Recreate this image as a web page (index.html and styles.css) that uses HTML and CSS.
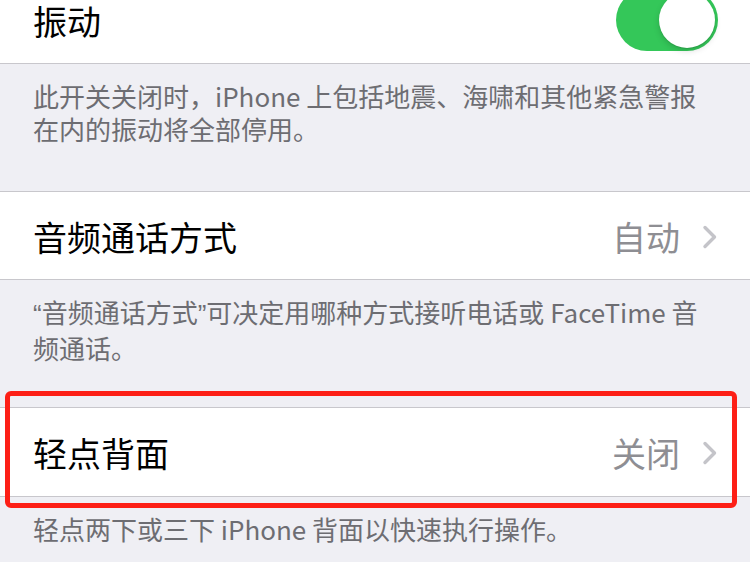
FILE: index.html
```html
<!DOCTYPE html>
<html lang="zh-CN">
<head>
<meta charset="utf-8">
<link rel="stylesheet" href="styles.css">
</head>
<body>
<div class="page">
  <div class="cell first">
    <span class="title">振动</span>
    <span class="toggle"><span class="knob"></span></span>
  </div>
  <div class="footer">此开关关闭时，iPhone 上包括地震、海啸和其他紧急警报<br>在内的振动将全部停用。</div>

  <div class="cell">
    <span class="title">音频通话方式</span>
    <span class="detail">自动
      <svg class="chev" width="16" height="24" viewBox="0 0 16 24"><path d="M3 2.5 L12.5 12 L3 21.5" fill="none" stroke="#c4c4c9" stroke-width="3.4" stroke-linecap="round" stroke-linejoin="round"/></svg>
    </span>
  </div>
  <div class="footer"><span class="q">“</span>音频通话方式<span class="q">”</span>可决定用哪种方式接听电话或 FaceTime 音<br>频通话。</div>

  <div class="cell marked">
    <span class="title">轻点背面</span>
    <span class="detail">关闭
      <svg class="chev" width="16" height="24" viewBox="0 0 16 24"><path d="M3 2.5 L12.5 12 L3 21.5" fill="none" stroke="#c4c4c9" stroke-width="3.4" stroke-linecap="round" stroke-linejoin="round"/></svg>
    </span>
    <span class="redbox"></span>
  </div>
  <div class="footer">轻点两下或三下 iPhone 背面以快速执行操作。</div>
</div>
</body>
</html>
```
FILE: styles.css
```css
html, body {
  margin: 0;
  padding: 0;
  background: #efeff4;
  overflow: hidden;
}
body {
  width: 750px;
  height: 562px;
  font-family: "Noto Sans CJK SC", "Noto Sans", sans-serif;
}
.page {
  display: flex;
  flex-direction: column;
  margin-top: -25px;
}
.cell {
  position: relative;
  height: 87px;
  background: #ffffff;
  border-top: 1px solid #c8c7cc;
  border-bottom: 1px solid #c8c7cc;
  display: flex;
  align-items: center;
  justify-content: space-between;
  padding: 0 32px 0 33px;
}
.marked {
  height: 88px;
}
.title {
  font-size: 34px;
  color: #000000;
  line-height: 40px;
  margin-top: 2px;
}
.detail {
  display: flex;
  align-items: center;
  gap: 22px;
  font-size: 34px;
  color: #8e8e93;
  line-height: 40px;
  margin-top: 2px;
}
.chev {
  display: block;
}
.toggle {
  position: relative;
  width: 102px;
  height: 62px;
  border-radius: 31px;
  background: #34c759;
  display: flex;
  align-items: center;
  justify-content: flex-end;
  padding: 0 3px;
  box-sizing: border-box;
}
.knob {
  width: 56px;
  height: 56px;
  border-radius: 50%;
  background: #ffffff;
  box-shadow: 0 3px 6px rgba(0,0,0,0.15), 0 1px 1px rgba(0,0,0,0.1);
}
.footer {
  height: 127px;
  box-sizing: border-box;
  padding: 15px 30px 0 33px;
  font-size: 26px;
  line-height: 33px;
  color: #6d6d72;
  white-space: nowrap;
}
.q {
  font-family: "Liberation Sans", "Noto Sans", sans-serif;
}
.redbox {
  position: absolute;
  left: 5px;
  right: 13px;
  top: -17px;
  bottom: -12px;
  border: 5px solid #fd1f16;
  border-radius: 6px;
  pointer-events: none;
}
```
